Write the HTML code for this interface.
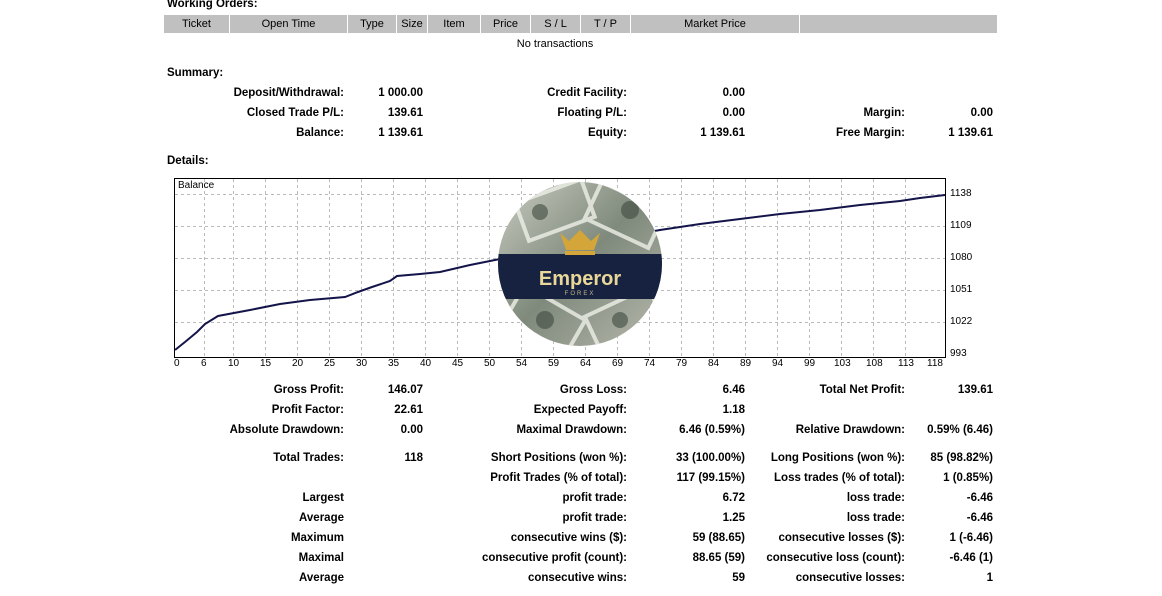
<!DOCTYPE html>
<html><head><meta charset="utf-8"><style>
body{margin:0;width:1162px;height:596px;background:#fff;position:relative;overflow:hidden;font-family:"Liberation Sans",sans-serif;font-size:12px;color:#000}
.t{position:absolute;white-space:nowrap;font-weight:bold;line-height:14px;font-size:11.5px}
.r{position:absolute;white-space:nowrap;font-weight:bold;line-height:14px;width:300px;text-align:right;font-size:11.5px}
.h{position:absolute;top:15px;height:18px;background:#c0c0c0;text-align:center;line-height:18px;font-size:11px}
.ax{position:absolute;font-size:10px;line-height:10px;font-family:"Liberation Sans",sans-serif}
</style></head><body>
<div class="t" style="left:167px;top:-3px">Working Orders:</div>
<div class="h" style="left:164px;width:65px">Ticket</div>
<div class="h" style="left:230px;width:117px">Open Time</div>
<div class="h" style="left:348px;width:48px">Type</div>
<div class="h" style="left:397px;width:30px">Size</div>
<div class="h" style="left:428px;width:52px">Item</div>
<div class="h" style="left:481px;width:49px">Price</div>
<div class="h" style="left:531px;width:49px">S / L</div>
<div class="h" style="left:581px;width:49px">T / P</div>
<div class="h" style="left:631px;width:168px">Market Price</div>
<div class="h" style="left:800px;width:197px"></div>
<div style="position:absolute;left:480px;top:38px;width:150px;text-align:center;font-size:11px">No transactions</div>

<div class="t" style="left:167px;top:66px">Summary:</div>
<div class="r" style="left:44px;top:86px">Deposit/Withdrawal:</div><div class="r" style="left:123px;top:86px">1 000.00</div>
<div class="r" style="left:327px;top:86px">Credit Facility:</div><div class="r" style="left:445px;top:86px">0.00</div>
<div class="r" style="left:44px;top:106px">Closed Trade P/L:</div><div class="r" style="left:123px;top:106px">139.61</div>
<div class="r" style="left:327px;top:106px">Floating P/L:</div><div class="r" style="left:445px;top:106px">0.00</div>
<div class="r" style="left:605px;top:106px">Margin:</div><div class="r" style="left:693px;top:106px">0.00</div>
<div class="r" style="left:44px;top:126px">Balance:</div><div class="r" style="left:123px;top:126px">1 139.61</div>
<div class="r" style="left:327px;top:126px">Equity:</div><div class="r" style="left:445px;top:126px">1 139.61</div>
<div class="r" style="left:605px;top:126px">Free Margin:</div><div class="r" style="left:693px;top:126px">1 139.61</div>
<div class="t" style="left:167px;top:154px">Details:</div>

<svg style="position:absolute;left:0;top:0" width="1162" height="596">
<rect x="174.5" y="178.5" width="771" height="179" fill="#fff" stroke="#000"/>
<g stroke="#bbb" stroke-dasharray="3,3" stroke-width="1">
<line x1="175" x2="945" y1="194.5" y2="194.5"/><line x1="175" x2="945" y1="226.5" y2="226.5"/><line x1="175" x2="945" y1="258.5" y2="258.5"/><line x1="175" x2="945" y1="290.5" y2="290.5"/><line x1="175" x2="945" y1="322.5" y2="322.5"/>
<line x1="204.5" x2="204.5" y1="179" y2="357"/><line x1="233.5" x2="233.5" y1="179" y2="357"/><line x1="265.5" x2="265.5" y1="179" y2="357"/><line x1="297.5" x2="297.5" y1="179" y2="357"/><line x1="329.5" x2="329.5" y1="179" y2="357"/><line x1="361.5" x2="361.5" y1="179" y2="357"/><line x1="393.5" x2="393.5" y1="179" y2="357"/><line x1="425.5" x2="425.5" y1="179" y2="357"/><line x1="457.5" x2="457.5" y1="179" y2="357"/><line x1="489.5" x2="489.5" y1="179" y2="357"/><line x1="521.5" x2="521.5" y1="179" y2="357"/><line x1="553.5" x2="553.5" y1="179" y2="357"/><line x1="585.5" x2="585.5" y1="179" y2="357"/><line x1="617.5" x2="617.5" y1="179" y2="357"/><line x1="649.5" x2="649.5" y1="179" y2="357"/><line x1="681.5" x2="681.5" y1="179" y2="357"/><line x1="713.5" x2="713.5" y1="179" y2="357"/><line x1="745.5" x2="745.5" y1="179" y2="357"/><line x1="777.5" x2="777.5" y1="179" y2="357"/><line x1="809.5" x2="809.5" y1="179" y2="357"/><line x1="841.5" x2="841.5" y1="179" y2="357"/><line x1="873.5" x2="873.5" y1="179" y2="357"/><line x1="905.5" x2="905.5" y1="179" y2="357"/>
</g>
<polyline fill="none" stroke="#14144a" stroke-width="2" points="175,350 185,342 197,332 205,324 218,316 250,310 280,304 310,300 345,297 358,292 372,287 390,281 397,276 420,274 440,272 470,265 500,259 540,252 580,242 620,237 660,230 700,224 740,219 780,214 820,210 860,205 900,201 920,198 945,195"/>
<defs><clipPath id="c"><circle cx="580" cy="264" r="82"/></clipPath>
<linearGradient id="g" x1="0" y1="0" x2="1" y2="1"><stop offset="0" stop-color="#c9cbc0"/><stop offset=".5" stop-color="#7f8a7c"/><stop offset="1" stop-color="#b6b8ac"/></linearGradient></defs>
<g clip-path="url(#c)">
<rect x="498" y="182" width="164" height="164" fill="url(#g)"/>
<g fill="none" stroke="#eef0e8" stroke-width="4" opacity=".8">
<rect x="520" y="190" width="70" height="40" transform="rotate(-20 555 210)"/>
<rect x="590" y="195" width="70" height="40" transform="rotate(25 625 215)"/>
<rect x="510" y="300" width="70" height="40" transform="rotate(30 545 320)"/>
<rect x="590" y="300" width="70" height="40" transform="rotate(-25 625 320)"/>
</g>
<g fill="#404a40" opacity=".6"><circle cx="540" cy="212" r="8"/><circle cx="630" cy="210" r="9"/><circle cx="545" cy="320" r="9"/><circle cx="620" cy="320" r="8"/></g>
<rect x="498" y="254" width="164" height="45" fill="#16223f"/>
</g>
<path d="M560 233 L566 250 L594 250 L600 233 L591 241 L580 230 L569 241 Z" fill="#d4a63a"/>
<rect x="565" y="251" width="30" height="4" fill="#d4a63a"/>
<text x="580" y="285" text-anchor="middle" font-family="Liberation Sans" font-size="20" font-weight="bold" fill="#e9d79a">Emperor</text>
<text x="580" y="295" text-anchor="middle" font-family="Liberation Sans" font-size="6" fill="#c9b888" letter-spacing="2">FOREX</text>
</svg>
<div class="ax" style="left:178px;top:181px">Balance</div>
<div class="ax" style="left:950px;top:189px">1138</div>
<div class="ax" style="left:950px;top:221px">1109</div>
<div class="ax" style="left:950px;top:253px">1080</div>
<div class="ax" style="left:950px;top:285px">1051</div>
<div class="ax" style="left:950px;top:317px">1022</div>
<div class="ax" style="left:950px;top:349px">993</div>
<div style="position:absolute;top:359px;left:0">
<div class="ax" style="left:174px">0</div><div class="ax" style="left:201px">6</div><div class="ax" style="left:228px">10</div><div class="ax" style="left:260px">15</div><div class="ax" style="left:292px">20</div><div class="ax" style="left:324px">25</div><div class="ax" style="left:356px">30</div><div class="ax" style="left:388px">35</div><div class="ax" style="left:420px">40</div><div class="ax" style="left:452px">45</div><div class="ax" style="left:484px">50</div><div class="ax" style="left:516px">54</div><div class="ax" style="left:548px">59</div><div class="ax" style="left:580px">64</div><div class="ax" style="left:612px">69</div><div class="ax" style="left:644px">74</div><div class="ax" style="left:676px">79</div><div class="ax" style="left:708px">84</div><div class="ax" style="left:740px">89</div><div class="ax" style="left:772px">94</div><div class="ax" style="left:804px">99</div><div class="ax" style="left:834px">103</div><div class="ax" style="left:866px">108</div><div class="ax" style="left:898px">113</div><div class="ax" style="left:927px">118</div>
</div>

<div class="r" style="left:44px;top:383px">Gross Profit:</div><div class="r" style="left:123px;top:383px">146.07</div>
<div class="r" style="left:327px;top:383px">Gross Loss:</div><div class="r" style="left:445px;top:383px">6.46</div>
<div class="r" style="left:605px;top:383px">Total Net Profit:</div><div class="r" style="left:693px;top:383px">139.61</div>
<div class="r" style="left:44px;top:403px">Profit Factor:</div><div class="r" style="left:123px;top:403px">22.61</div>
<div class="r" style="left:327px;top:403px">Expected Payoff:</div><div class="r" style="left:445px;top:403px">1.18</div>
<div class="r" style="left:44px;top:423px">Absolute Drawdown:</div><div class="r" style="left:123px;top:423px">0.00</div>
<div class="r" style="left:327px;top:423px">Maximal Drawdown:</div><div class="r" style="left:445px;top:423px">6.46 (0.59%)</div>
<div class="r" style="left:605px;top:423px">Relative Drawdown:</div><div class="r" style="left:693px;top:423px">0.59% (6.46)</div>
<div class="r" style="left:44px;top:451px">Total Trades:</div><div class="r" style="left:123px;top:451px">118</div>
<div class="r" style="left:327px;top:451px">Short Positions (won %):</div><div class="r" style="left:445px;top:451px">33 (100.00%)</div>
<div class="r" style="left:605px;top:451px">Long Positions (won %):</div><div class="r" style="left:693px;top:451px">85 (98.82%)</div>
<div class="r" style="left:327px;top:471px">Profit Trades (% of total):</div><div class="r" style="left:445px;top:471px">117 (99.15%)</div>
<div class="r" style="left:605px;top:471px">Loss trades (% of total):</div><div class="r" style="left:693px;top:471px">1 (0.85%)</div>
<div class="r" style="left:44px;top:491px">Largest</div>
<div class="r" style="left:327px;top:491px">profit trade:</div><div class="r" style="left:445px;top:491px">6.72</div>
<div class="r" style="left:605px;top:491px">loss trade:</div><div class="r" style="left:693px;top:491px">-6.46</div>
<div class="r" style="left:44px;top:511px">Average</div>
<div class="r" style="left:327px;top:511px">profit trade:</div><div class="r" style="left:445px;top:511px">1.25</div>
<div class="r" style="left:605px;top:511px">loss trade:</div><div class="r" style="left:693px;top:511px">-6.46</div>
<div class="r" style="left:44px;top:531px">Maximum</div>
<div class="r" style="left:327px;top:531px">consecutive wins ($):</div><div class="r" style="left:445px;top:531px">59 (88.65)</div>
<div class="r" style="left:605px;top:531px">consecutive losses ($):</div><div class="r" style="left:693px;top:531px">1 (-6.46)</div>
<div class="r" style="left:44px;top:551px">Maximal</div>
<div class="r" style="left:327px;top:551px">consecutive profit (count):</div><div class="r" style="left:445px;top:551px">88.65 (59)</div>
<div class="r" style="left:605px;top:551px">consecutive loss (count):</div><div class="r" style="left:693px;top:551px">-6.46 (1)</div>
<div class="r" style="left:44px;top:571px">Average</div>
<div class="r" style="left:327px;top:571px">consecutive wins:</div><div class="r" style="left:445px;top:571px">59</div>
<div class="r" style="left:605px;top:571px">consecutive losses:</div><div class="r" style="left:693px;top:571px">1</div>
</body></html>
